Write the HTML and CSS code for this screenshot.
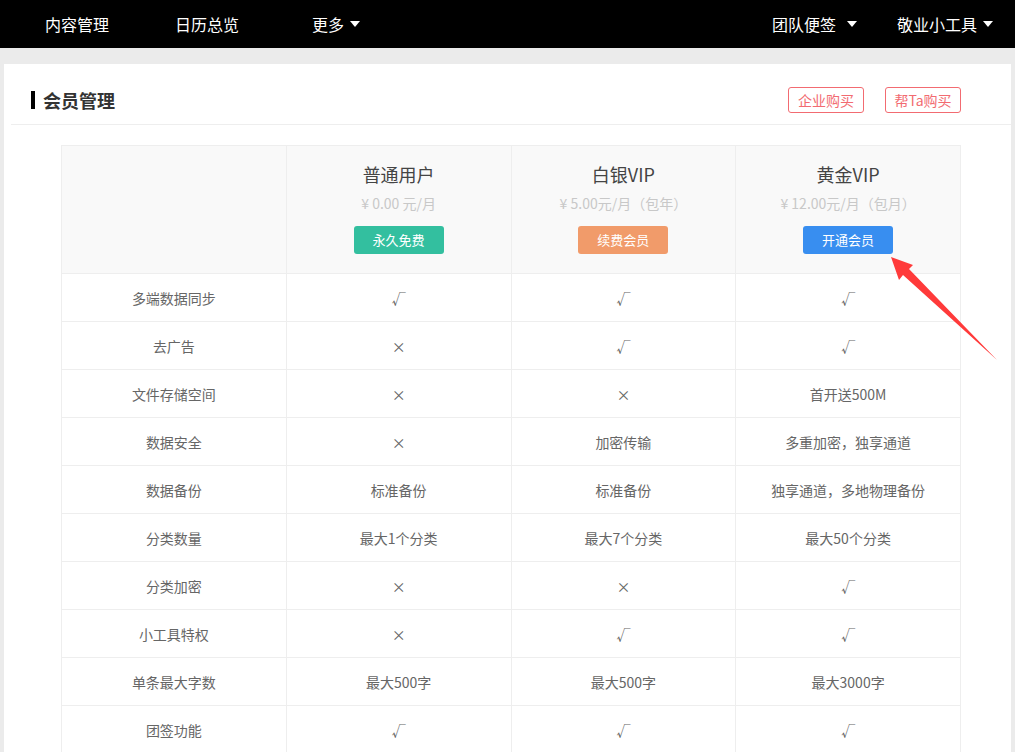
FILE: index.html
```html
<!DOCTYPE html>
<html lang="zh-CN">
<head>
<meta charset="utf-8">
<title>会员管理</title>
<link rel="stylesheet" href="styles.css">
</head>
<body>
<nav class="topnav">
  <div class="nav-left">
    <a class="nav-item">内容管理</a>
    <a class="nav-item">日历总览</a>
    <a class="nav-item nav-more">更多<span class="caret"></span></a>
  </div>
  <div class="nav-right">
    <a class="nav-item">团队便签<span class="caret caret-wide"></span></a>
    <a class="nav-item">敬业小工具<span class="caret"></span></a>
  </div>
</nav>

<main class="panel">
  <header class="panel-head">
    <h1 class="panel-title">会员管理</h1>
    <div class="head-actions">
      <a class="btn-outline">企业购买</a>
      <a class="btn-outline">帮Ta购买</a>
    </div>
  </header>

  <table class="plans">
    <thead>
      <tr>
        <th></th>
        <th><div class="plan"><div class="plan-name">普通用户</div><div class="plan-price">¥ 0.00 元/月</div><a class="plan-btn green">永久免费</a></div></th>
        <th><div class="plan"><div class="plan-name">白银VIP</div><div class="plan-price">¥ 5.00元/月（包年）</div><a class="plan-btn orange">续费会员</a></div></th>
        <th><div class="plan"><div class="plan-name">黄金VIP</div><div class="plan-price">¥ 12.00元/月（包月）</div><a class="plan-btn blue">开通会员</a></div></th>
      </tr>
    </thead>
    <tbody>
      <tr><td>多端数据同步</td><td>√</td><td>√</td><td>√</td></tr>
      <tr><td>去广告</td><td>×</td><td>√</td><td>√</td></tr>
      <tr><td>文件存储空间</td><td>×</td><td>×</td><td>首开送500M</td></tr>
      <tr><td>数据安全</td><td>×</td><td>加密传输</td><td>多重加密，独享通道</td></tr>
      <tr><td>数据备份</td><td>标准备份</td><td>标准备份</td><td>独享通道，多地物理备份</td></tr>
      <tr><td>分类数量</td><td>最大1个分类</td><td>最大7个分类</td><td>最大50个分类</td></tr>
      <tr><td>分类加密</td><td>×</td><td>×</td><td>√</td></tr>
      <tr><td>小工具特权</td><td>×</td><td>√</td><td>√</td></tr>
      <tr><td>单条最大字数</td><td>最大500字</td><td>最大500字</td><td>最大3000字</td></tr>
      <tr><td>团签功能</td><td>√</td><td>√</td><td>√</td></tr>
    </tbody>
  </table>
</main>

<svg class="pointer-arrow" width="145" height="115" viewBox="0 0 145 115" aria-hidden="true">
  <polygon points="33,7 55,15 51,19 139,110 45,25 41,30" fill="#ff3a3a"/>
</svg>
</body>
</html>
```

FILE: styles.css
```css
html, body {
  margin: 0;
  padding: 0;
  overflow: hidden;
}
body {
  background: #ebebeb;
  font-family: "Noto Sans CJK SC", "Liberation Sans", sans-serif;
  color: #666;
  position: relative;
}

.topnav {
  height: 48px;
  background: #000;
  display: flex;
  justify-content: space-between;
  align-items: center;
  color: #fff;
  font-size: 16px;
}
.nav-left {
  display: flex;
  gap: 66px;
  padding-left: 45px;
}
.nav-more {
  margin-left: 7px;
}
.nav-right {
  display: flex;
  gap: 40px;
  padding-right: 22px;
}
.nav-item {
  display: flex;
  align-items: center;
  line-height: 20px;
  color: #fff;
}
.caret {
  display: inline-block;
  width: 0;
  height: 0;
  margin-left: 6px;
  border-left: 5px solid transparent;
  border-right: 5px solid transparent;
  border-top: 6px solid #fff;
}
.caret-wide {
  margin-left: 11px;
}

.panel {
  background: #fff;
  margin: 16px 4px 0 4px;
  padding-top: 12px;
  min-height: 800px;
}
.panel-head {
  height: 48px;
  margin-left: 7px;
  padding: 0 50px 0 20px;
  border-bottom: 1px solid #eee;
  display: flex;
  align-items: center;
  justify-content: space-between;
}
.panel-title {
  margin: 0;
  font-size: 18px;
  font-weight: bold;
  color: #333;
  line-height: 24px;
  border-left: 4px solid #000;
  padding-left: 8px;
  height: 18px;
  display: flex;
  align-items: center;
}
.head-actions {
  display: flex;
  gap: 21px;
}
.btn-outline {
  width: 74px;
  height: 24px;
  border: 1px solid #f26b71;
  border-radius: 3px;
  color: #f26b71;
  font-size: 14px;
  line-height: 24px;
  text-align: center;
}

.plans {
  margin: 20px 0 0 57px;
  width: 900px;
  border-collapse: collapse;
  table-layout: fixed;
  font-size: 14px;
  color: #666;
}
.plans th,
.plans td {
  border: 1px solid #eee;
  text-align: center;
  padding: 0;
}
.plans thead th {
  background: #f9f9f9;
  font-weight: normal;
  height: 127px;
}
.plans tbody tr {
  height: 48px;
}
.plans td {
  line-height: 20px;
}

.plan {
  display: flex;
  flex-direction: column;
  align-items: center;
}
.plan-name {
  font-size: 18px;
  line-height: 24px;
  color: #444;
  margin-top: -3px;
}
.plan-price {
  margin-top: 7px;
  font-size: 14px;
  line-height: 20px;
  color: #c8c8c8;
}
.plan-btn {
  margin-top: 13px;
  width: 90px;
  height: 28px;
  border-radius: 3px;
  color: #fff;
  font-size: 13px;
  line-height: 28px;
}
.green { background: #33bf9f; }
.orange { background: #f19b6a; }
.blue { background: #388ef0; }

.pointer-arrow {
  position: absolute;
  left: 858px;
  top: 250px;
}
```
